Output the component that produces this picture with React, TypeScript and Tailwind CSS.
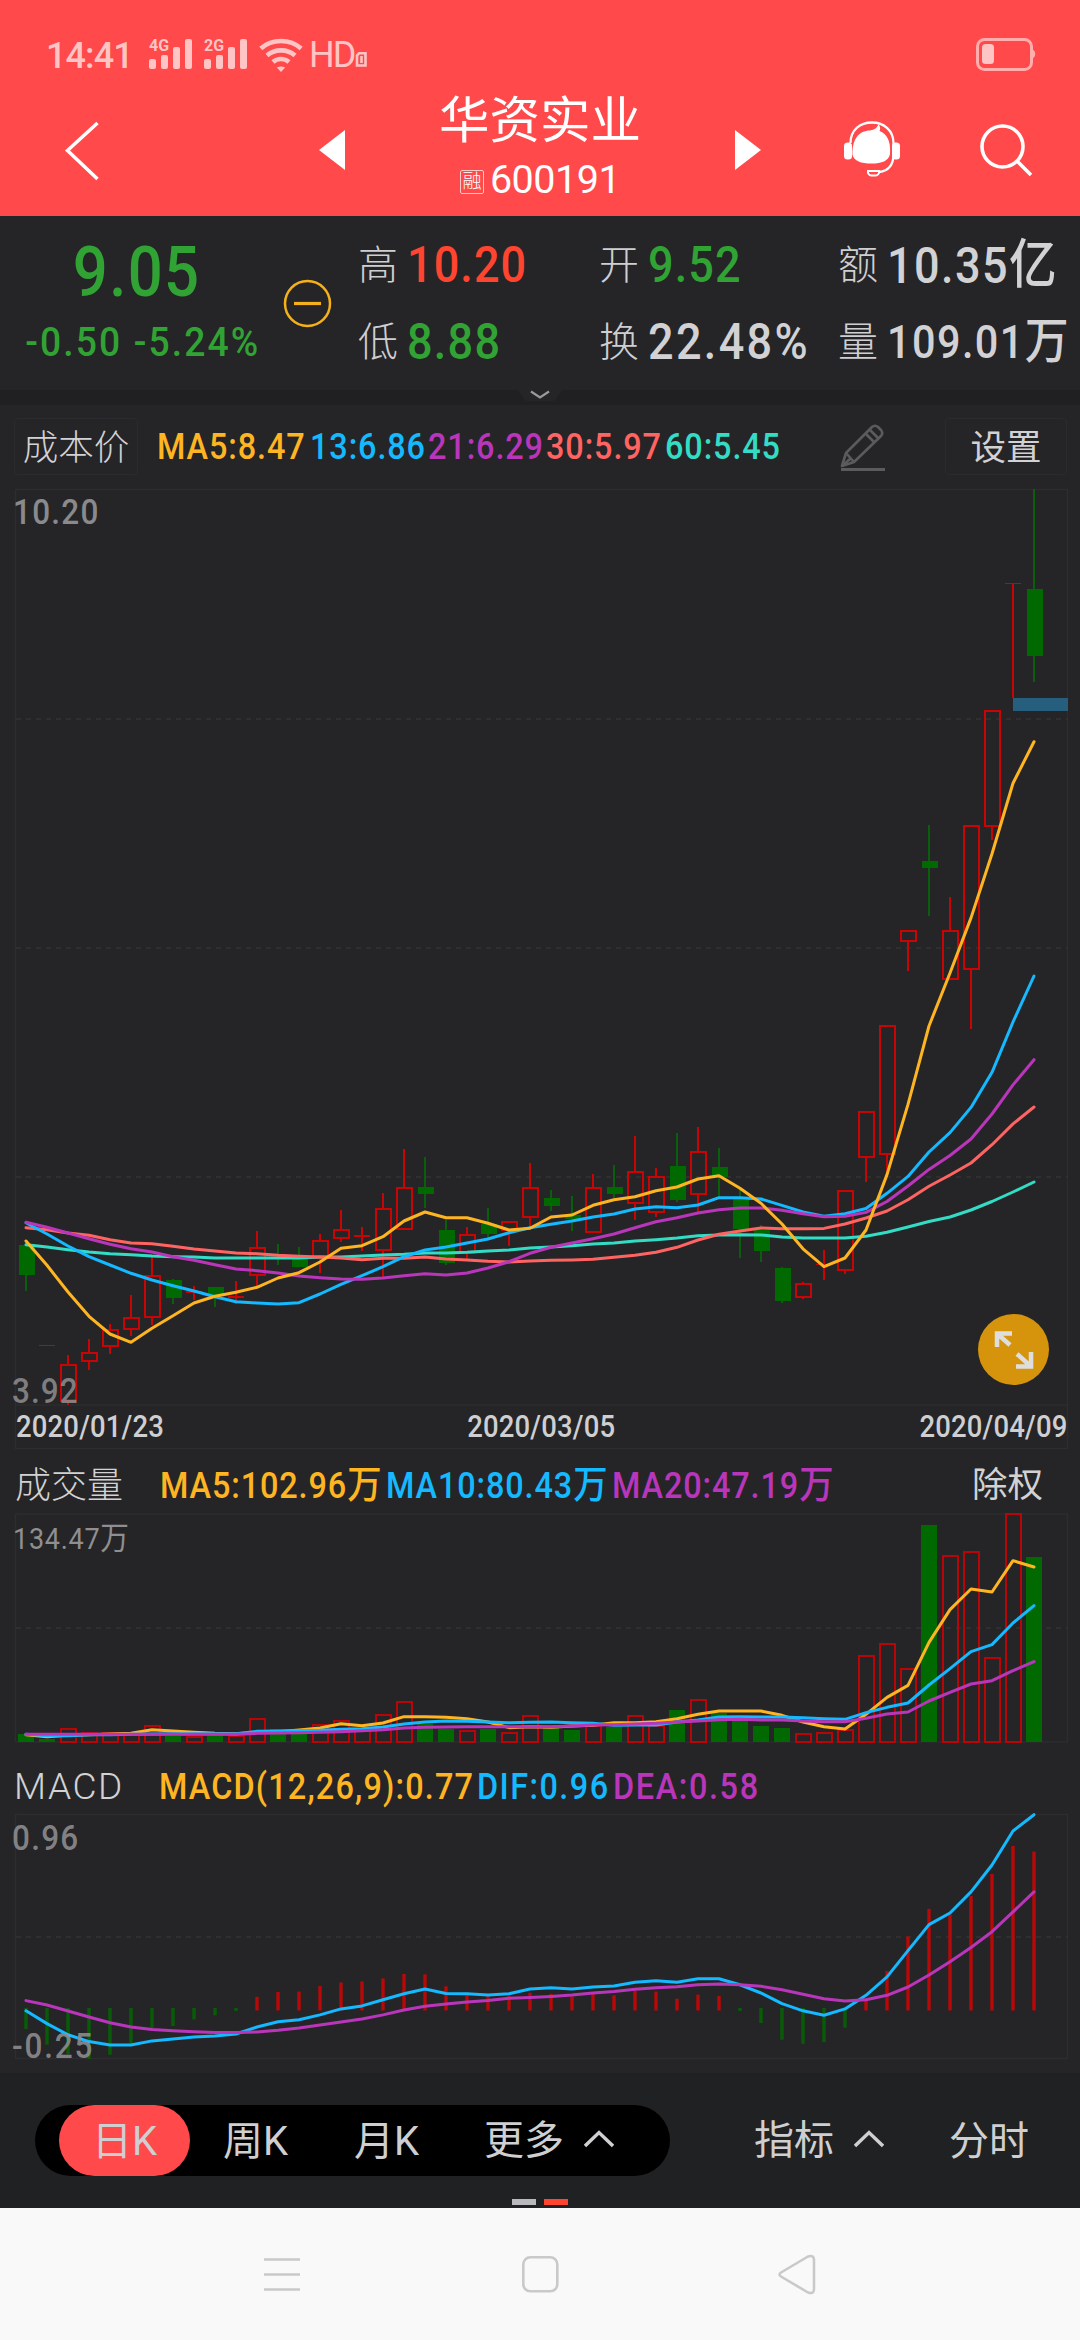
import { ReactNode } from "react";

type Candle = [kind: "r" | "g", high: number, top: number, bottom: number, low: number];

const STEP = 21;
const FIRST_X = 26;
const xAt = (i: number) => FIRST_X + i * STEP;

const candles: Candle[] = [
  ["g", 1245, 1245, 1275, 1291],
  ["g", 1345, 1345, 1346, 1346],
  ["r", 1355, 1365, 1401, 1405],
  ["r", 1339, 1353, 1361, 1370],
  ["r", 1324, 1330, 1346, 1354],
  ["r", 1295, 1318, 1329, 1336],
  ["r", 1255, 1276, 1317, 1325],
  ["g", 1279, 1280, 1298, 1304],
  ["r", 1286, 1291, 1293, 1300],
  ["g", 1287, 1287, 1296, 1307],
  ["r", 1281, 1296, 1298, 1304],
  ["r", 1231, 1248, 1275, 1288],
  ["g", 1244, 1255, 1256, 1265],
  ["g", 1247, 1258, 1267, 1267],
  ["r", 1234, 1241, 1258, 1273],
  ["r", 1210, 1230, 1238, 1242],
  ["r", 1227, 1235, 1237, 1251],
  ["r", 1193, 1209, 1250, 1279],
  ["r", 1149, 1188, 1229, 1229],
  ["g", 1157, 1187, 1194, 1208],
  ["g", 1220, 1230, 1263, 1265],
  ["r", 1227, 1235, 1253, 1259],
  ["g", 1208, 1224, 1234, 1240],
  ["r", 1222, 1222, 1230, 1246],
  ["r", 1163, 1188, 1217, 1227],
  ["g", 1190, 1198, 1206, 1211],
  ["g", 1196, 1215, 1219, 1231],
  ["r", 1174, 1188, 1232, 1233],
  ["g", 1165, 1187, 1194, 1198],
  ["r", 1136, 1172, 1203, 1220],
  ["r", 1168, 1177, 1212, 1217],
  ["g", 1133, 1166, 1200, 1202],
  ["r", 1127, 1152, 1194, 1213],
  ["g", 1148, 1167, 1177, 1198],
  ["g", 1187, 1199, 1229, 1258],
  ["g", 1225, 1230, 1251, 1262],
  ["g", 1267, 1268, 1301, 1303],
  ["r", 1282, 1284, 1297, 1299],
  ["r", 1250, 1264, 1265, 1280],
  ["r", 1191, 1191, 1270, 1274],
  ["r", 1112, 1112, 1157, 1182],
  ["r", 1026, 1026, 1154, 1173],
  ["r", 931, 931, 941, 971],
  ["g", 825, 861, 868, 916],
  ["r", 897, 931, 979, 979],
  ["r", 826, 826, 969, 1029],
  ["r", 711, 711, 826, 840],
  ["r", 583, 583, 584, 698],
  ["g", 489, 589, 656, 682],
];

const priceLines = [
  {
    color: "#33dcc5",
    ys: [1244.7, 1247, 1249.7, 1252, 1253.7, 1254.7, 1256, 1256.7, 1257, 1258, 1258, 1258, 1258, 1258, 1257, 1257, 1256, 1255, 1254.3, 1253, 1253, 1252.3, 1251, 1250, 1248, 1247, 1245.7, 1244, 1243, 1241, 1239.7, 1238, 1235.7, 1235, 1234.7, 1235, 1237, 1238, 1238, 1238, 1236.2, 1232.3, 1227, 1221.5, 1217, 1210, 1201.5, 1192, 1182],
  },
  {
    color: "#ff6463",
    ys: [1227.7, 1229.7, 1233, 1235.3, 1239.7, 1243, 1243.7, 1246.3, 1249, 1251, 1253, 1253.7, 1255.3, 1256.3, 1257, 1258, 1259.7, 1258.3, 1258.3, 1257, 1259, 1260, 1261.3, 1262, 1261, 1260.3, 1260, 1259.3, 1257.3, 1255.3, 1252.3, 1247.3, 1240, 1234.3, 1231, 1228, 1228.8, 1228.8, 1228.4, 1224, 1218, 1211, 1199.8, 1186.3, 1175, 1163, 1144.7, 1123.9, 1107],
  },
  {
    color: "#14b9ff",
    ys: [1222.7, 1234, 1246, 1256.7, 1265, 1273.3, 1280, 1285.7, 1291, 1296.7, 1301.7, 1303, 1304, 1302.7, 1294, 1284.3, 1275.7, 1266.7, 1256.7, 1250, 1247, 1243, 1239, 1232.7, 1227.7, 1224.3, 1221, 1217, 1214, 1209, 1206.7, 1207.7, 1205, 1197.7, 1197.7, 1199, 1205.4, 1212, 1216.3, 1213.7, 1208.5, 1193.3, 1176.4, 1152, 1132.6, 1107.4, 1072.3, 1022, 976],
  },
  {
    color: "#b936bb",
    ys: [1222.3, 1227.3, 1233, 1238.7, 1244.3, 1248.7, 1252, 1256.7, 1260.3, 1264.7, 1269, 1270.7, 1273, 1276, 1277.7, 1279, 1279.3, 1278, 1275.7, 1273.7, 1275, 1273, 1268, 1261.7, 1253.3, 1247.3, 1243, 1238.7, 1234, 1227.7, 1221.7, 1217.7, 1213, 1209.7, 1208, 1208, 1210.2, 1213.7, 1216.7, 1216.3, 1212.4, 1201.5, 1186, 1169.4, 1155.5, 1139, 1114, 1084.9, 1059.7],
  },
  {
    color: "#ffb522",
    ys: [1241, 1265.3, 1292, 1316.3, 1334, 1342.3, 1328.3, 1315.7, 1303, 1296.3, 1292.3, 1287.3, 1278, 1272.7, 1262, 1248.3, 1245.7, 1236.7, 1221, 1212, 1217.7, 1217.7, 1223.3, 1230, 1228.3, 1217, 1215, 1205.3, 1199.7, 1196.7, 1190.7, 1187, 1179, 1175.7, 1188.3, 1203.3, 1224, 1248.8, 1266.6, 1258, 1230, 1174.6, 1104.4, 1026, 973, 917.9, 853.7, 783.3, 741.7],
  },
];

// Volume bars take their colour from the candle of the same day
const volumes = [25, 8, 40, 26, 26, 23, 48, 19, 16, 21, 18, 69, 38, 24, 51, 63, 38, 81, 119, 53, 38, 32, 38, 28, 77, 42, 36, 48, 44, 77, 48, 95, 125, 88, 66, 49, 42, 23, 28, 36, 257, 294, 218, 650, 557, 569, 251, 683, 554];

const volumeLines = [
  {
    color: "#ffb522",
    vs: [22, 16, 20, 22, 24, 26, 37, 33, 29, 26, 25, 29, 31, 36, 42, 55, 49, 57, 76, 76, 74, 70, 60, 43, 46, 44, 48, 50, 58, 58, 61, 70, 83, 93, 93, 93, 80, 60, 46, 39, 83, 134, 170, 299, 397, 459, 450, 544, 525],
  },
  {
    color: "#14b9ff",
    vs: [23, 19, 19, 22, 22, 23, 24, 25, 25, 25, 25, 32, 33, 34, 35, 38, 40, 45, 54, 60, 63, 62, 60, 58, 59, 60, 58, 56, 50, 51, 51, 60, 66, 75, 76, 75, 75, 73, 70, 68, 88, 104, 117, 171, 220, 271, 292, 357, 409],
  },
  {
    color: "#b936bb",
    vs: [23, 23, 23, 23, 23, 23, 23, 23, 23, 23, 23, 26, 27, 28, 29, 31, 34, 37, 42, 44, 45, 46, 46, 46, 46, 46, 48, 51, 52, 54, 56, 60, 63, 67, 68, 66, 66, 63, 61, 61, 71, 84, 90, 123, 149, 174, 184, 214, 241],
  },
];

const MACD_ZERO = 2009.5;
const macdBars = [2029, 2044.6, 2054, 2059, 2054.8, 2043.5, 2028.8, 2026, 2019.4, 2015.3, 2011, 1996.8, 1992, 1991.6, 1986, 1982.5, 1981.4, 1978.4, 1974, 1974.3, 1986.3, 1993.8, 1995, 1995.7, 1992.7, 1993.8, 1996.5, 1993.8, 1995.3, 1990.8, 1991.6, 1998.7, 1994.6, 1996, 2011, 2023, 2039.7, 2043.9, 2042, 2027.7, 1998.3, 1970.9, 1936.3, 1908.8, 1914.4, 1896, 1874, 1846, 1851.6];
const dif = [2010.8, 2023.6, 2034.8, 2041.6, 2045, 2045, 2040.9, 2039, 2037, 2036, 2034, 2027, 2021.7, 2019.8, 2014.9, 2008.9, 2005.9, 1999.8, 1993.8, 1989, 1993.5, 1993.8, 1995, 1993.8, 1989, 1987.8, 1989, 1987, 1986, 1982.2, 1980.7, 1982.2, 1978.8, 1978.8, 1984.8, 1993, 2003.6, 2010.8, 2015.3, 2008.9, 1995.3, 1976.9, 1950.6, 1924.6, 1913, 1891.9, 1865, 1831, 1814.7];
const dea = [2000.6, 2005, 2011, 2017, 2022.8, 2027, 2029.6, 2030.7, 2031.8, 2032.6, 2032.6, 2032, 2030.3, 2028, 2025, 2022, 2019, 2014.9, 2010, 2006.2, 2004, 2002, 2000.6, 1998.3, 1997.6, 1996.5, 1995, 1993, 1991.6, 1989.3, 1987.8, 1986.7, 1984.8, 1984, 1984.8, 1986.3, 1989.7, 1994.2, 1998.7, 2001, 1999.8, 1995.3, 1987, 1975, 1961.8, 1947.5, 1931.7, 1911.8, 1891.9];

const toPoints = (ys: number[]) => ys.map((y, i) => `${xAt(i)},${y}`).join(" ");

const Line = ({ ys, color }: { ys: number[]; color: string }) => (
  <polyline points={toPoints(ys)} fill="none" stroke={color} strokeWidth="3" strokeLinejoin="round" strokeLinecap="round" />
);

const GridLine = ({ y }: { y: number }) => (
  <line x1="16" x2="1068" y1={y} y2={y} stroke="#333335" strokeWidth="1.5" strokeDasharray="5 5" />
);

const PriceChart = () => (
  <svg className="block" width="1080" height="961" viewBox="0 488 1080 961">
    <path d="M15.5 489.5H1067.5V1448.5H15.5ZM15.5 1405H1067.5" fill="none" stroke="#2d2d30" strokeWidth="1.5" />
    <GridLine y={719} />
    <GridLine y={948} />
    <GridLine y={1177} />
    {candles.map(([kind, high, top, bottom, low], i) => {
      const x = xAt(i);
      const flat = bottom - top <= 2;
      const color = kind === "r" ? "#c80404" : "#006a00";
      const wick = kind === "r" ? color : "#0a5f0c";
      return (
        <g key={i} stroke={color} strokeWidth="2">
          {high < top && <line x1={x} x2={x} y1={high} y2={top} stroke={wick} />}
          {low > bottom && <line x1={x} x2={x} y1={bottom} y2={low} stroke={wick} />}
          {flat ? (
            <line x1={x - 8} x2={x + 8} y1={(top + bottom) / 2} y2={(top + bottom) / 2} strokeWidth={bottom - top} />
          ) : kind === "r" ? (
            <rect x={x - 7} y={top} width="15" height={bottom - top} fill="none" />
          ) : (
            <rect x={x - 7} y={top} width="16" height={bottom - top} fill={color} stroke="none" />
          )}
        </g>
      );
    })}
    <rect x="1013" y="698" width="55" height="13" fill="#265f7d" />
    {priceLines.map((line) => (
      <Line key={line.color} ys={line.ys} color={line.color} />
    ))}
  </svg>
);

const VolumeChart = () => (
  <svg className="block" width="1080" height="230" viewBox="0 1513 1080 230">
    <path d="M15.5 1514H1067.5V1742H15.5Z" fill="none" stroke="#2d2d30" strokeWidth="1.5" />
    <GridLine y={1628} />
    {volumes.map((v, i) => {
      const h = Math.round(v / 3);
      return candles[i][0] === "r" ? (
        <rect key={i} x={xAt(i) - 7} y={1742 - h} width="15" height={h} fill="none" stroke="#b80608" strokeWidth="2" />
      ) : (
        <rect key={i} x={xAt(i) - 8} y={1742 - h} width="16" height={h} fill="#006a00" />
      );
    })}
    {volumeLines.map((line) => (
      <Line key={line.color} ys={line.vs.map((v) => 1742 - v / 3)} color={line.color} />
    ))}
  </svg>
);

const MacdChart = () => (
  <svg className="block" width="1080" height="247" viewBox="0 1813 1080 247">
    <path d="M15.5 1814.5H1067.5V2058.5H15.5Z" fill="none" stroke="#2d2d30" strokeWidth="1.5" />
    <GridLine y={1937} />
    {macdBars.map((y, i) => (
      <line
        key={i}
        x1={xAt(i)}
        x2={xAt(i)}
        y1={y > MACD_ZERO ? 2008 : 2010.5}
        y2={y}
        stroke={y > MACD_ZERO ? "#085c08" : "#b80808"}
        strokeWidth="3.4"
      />
    ))}
    <Line ys={dif} color="#14b9ff" />
    <Line ys={dea} color="#b936bb" />
  </svg>
);

const StatusBar = () => (
  <div className="flex h-[110px] items-start pl-[46px] pr-[43px] pt-[36px] text-[#ffc4c4]">
    <span className="mt-px w-[103px] whitespace-nowrap text-[36px] font-medium leading-[38px] tracking-[-0.9px]">14:41</span>
    {["4G", "2G"].map((net) => (
      <div key={net} className="relative mt-[3px] h-[30px] w-[55px]">
        <span className="absolute -top-px left-0 text-[16px] font-bold leading-[15px]">{net}</span>
        <div className="flex h-[30px] items-end gap-[5px]">
          <i className="h-[10px] w-[7px] rounded-[2px] bg-current" />
          <i className="h-[14px] w-[7px] rounded-[2px] bg-current" />
          <i className="h-[22px] w-[7px] rounded-[2px] bg-current" />
          <i className="h-[30px] w-[7px] rounded-[2px] bg-current" />
        </div>
      </div>
    ))}
    <svg className="mt-[2px]" width="44" height="34" viewBox="0 0 44 34" fill="none" stroke="currentColor" strokeWidth="4.6">
      <path d="M1.8 10.5C13 0.5 31 0.5 42.2 10.5" />
      <path d="M8 17.5C15.5 10.7 28.5 10.7 36 17.5" />
      <path d="M14 24C18.5 20 25.5 20 30 24" />
      <path d="M17.8 29.6Q22 27.5 26.2 29.6L22 34Z" fill="currentColor" stroke="none" />
    </svg>
    <span className="ml-[6px] mt-px w-[46px] text-[36px] leading-[37px] tracking-[-2px]">HD</span>
    <svg className="mt-[15px]" width="13" height="17" viewBox="0 0 13 17" fill="none" stroke="currentColor" strokeWidth="2.6">
      <path d="M4 2.3H10.5V14.5H2V4.5ZM6.5 5V12" />
    </svg>
    <svg className="ml-auto mt-[2px]" width="61" height="33" viewBox="0 0 61 33">
      <rect x="1.5" y="1.5" width="54" height="30" rx="7" fill="none" stroke="#ffadad" strokeWidth="3" />
      <rect x="6" y="6" width="12" height="20" rx="3.5" fill="#ffc4c4" />
      <path d="M57 12.5a3 4 0 0 1 0 7z" fill="#ffadad" stroke="#ffadad" strokeWidth="1.5" />
    </svg>
  </div>
);

const TitleBar = () => (
  <div className="-mt-[24px] flex h-[130px] items-start text-white">
    <svg className="ml-[64px] mt-[35px]" width="36" height="60" viewBox="0 0 36 60" fill="none" stroke="currentColor" strokeWidth="3.5">
      <path d="M33.5 2L3.5 29.5L33.5 58" />
    </svg>
    <svg className="ml-[219px] mt-[44px]" width="26" height="40" viewBox="0 0 26 40">
      <path d="M26 0V40L0 20Z" fill="currentColor" />
    </svg>
    <div className="flex w-[390px] flex-col items-center pt-[6px]">
      <h1 className="text-[50.5px] leading-[58px]">华资实业</h1>
      <div className="mt-[2px] flex h-[56px] items-center">
        <span className="mt-[3px] flex h-[24px] w-[24px] items-center justify-center rounded-[2px] border border-[#ffc8c8] text-[19px] font-light leading-none">融</span>
        <span className="ml-[6px] text-[39.5px] leading-none tracking-[-0.5px]">600191</span>
      </div>
    </div>
    <svg className="mt-[44px]" width="26" height="40" viewBox="0 0 26 40">
      <path d="M0 0V40L26 20Z" fill="currentColor" />
    </svg>
    <svg className="ml-[83px] mt-[35px]" width="56" height="56" viewBox="0 0 56 56">
      <path d="M6.5 22C6.5 9 16 1.5 28 1.5C40 1.5 49.5 9.5 49.5 22V33C49.5 45 44 50 35 51" fill="none" stroke="currentColor" strokeWidth="2.3" />
      <path d="M8.5 34C8 18 15 9.5 26 9.5C31 8.5 33 7 34.5 3C36.5 6 36.5 8 35.5 10C43 13 47 20 46 33C44.5 40 38 42.5 27.5 42.5C17 42.5 10 40 8.5 34Z" fill="currentColor" />
      <rect x="0" y="21.5" width="8" height="17" rx="3.5" fill="currentColor" />
      <rect x="48" y="21.5" width="8" height="17" rx="3.5" fill="currentColor" />
      <path d="M24 50H35V52Q34 54.5 31.5 54.5H27.5Q25 54.5 24 52Z" fill="none" stroke="currentColor" strokeWidth="2" />
    </svg>
    <svg className="ml-[80px] mt-[37px]" width="54" height="54" viewBox="0 0 54 54" fill="none" stroke="currentColor" strokeWidth="3.6">
      <circle cx="22.5" cy="23.5" r="20.5" />
      <path d="M37 38L51 52" />
    </svg>
  </div>
);

// Narrow, widely set figures
const Num = ({ children, className = "" }: { children: ReactNode; className?: string }) => (
  <span className={`inline-block origin-left scale-x-90 whitespace-nowrap ${className}`}>{children}</span>
);

const Unit = ({ children }: { children: ReactNode }) => <span className="text-[1.06em] leading-none">{children}</span>;

const Quote = ({ label, children, className }: { label: string; children: ReactNode; className: string }) => (
  <div className="flex h-[77px] items-center whitespace-nowrap">
    <span className="mt-[2px] w-[49px] shrink-0 text-[40px] font-light leading-none text-[#cfcfd1]">{label}</span>
    <Num className={`mt-px shrink-0 font-medium leading-none ${className}`}>{children}</Num>
  </div>
);

const QuotePanel = () => (
  <div className="flex h-[174px] pt-[10px]">
    <div className="flex w-[274px] flex-col items-center whitespace-nowrap font-medium text-[#31a334]">
      <span className="mt-[11px] scale-x-[0.88] text-[70px] leading-[70px] tracking-[1.6px]">9.05</span>
      <span className="ml-[12px] mt-[15px] scale-x-[0.92] text-[40.5px] leading-[40px] tracking-[2.3px]">-0.50 -5.24%</span>
    </div>
    <svg className="ml-[9px] mt-[53px]" width="49" height="49" viewBox="0 0 49 49" fill="none" stroke="#f5b11c">
      <circle cx="24.5" cy="24.5" r="22.5" strokeWidth="2.5" />
      <path d="M11 24.5H38" strokeWidth="3.2" />
    </svg>
    <div className="ml-[26px] w-[241px]">
      <Quote label="高" className="text-[50px] tracking-[1.2px] text-[#ff4530]">10.20</Quote>
      <Quote label="低" className="text-[50px] tracking-[1.4px] text-[#31a334]">8.88</Quote>
    </div>
    <div className="w-[239px]">
      <Quote label="开" className="text-[50px] tracking-[1.2px] text-[#31a334]">9.52</Quote>
      <Quote label="换" className="text-[50px] tracking-[2.6px] text-[#d2d2d4]">22.48%</Quote>
    </div>
    <div className="w-[240px]">
      <Quote label="额" className="text-[50px] tracking-[1.6px] text-[#d2d2d4]">10.35<Unit>亿</Unit></Quote>
      <Quote label="量" className="text-[46px] tracking-[1.6px] text-[#d2d2d4]">109.01<Unit>万</Unit></Quote>
    </div>
  </div>
);

const Divider = () => (
  <div className="flex h-[15px] justify-center bg-[#202022]">
    <svg width="52" height="15" viewBox="0 0 52 15" fill="none">
      <path d="M4 0H48L42 9Q41 11 38 11H14Q11 11 10 9Z" fill="#252527" />
      <path d="M17 1.5L26 7.5L35 1.5" stroke="#9a9a9c" strokeWidth="2.2" />
    </svg>
  </div>
);

const IndicatorBar = () => (
  <div className="flex h-[83px] items-start whitespace-nowrap pt-[13px] text-[35.5px] leading-[58px]">
    <span className="ml-[14px] h-[57px] w-[124px] rounded-[4px] border-[1.5px] border-[#2b2b2d] text-center font-light text-[#d2d2d4]">成本价</span>
    <div className="ml-[19px] flex text-[36px] font-medium leading-[58px] tracking-[1px]">
      <span className="w-[153px] text-[#ffb522]"><Num>MA5:8.47</Num></span>
      <span className="w-[118px] text-[#14b9ff]"><Num>13:6.86</Num></span>
      <span className="w-[118px] text-[#b936bb]"><Num>21:6.29</Num></span>
      <span className="w-[119px] text-[#ff6463]"><Num>30:5.97</Num></span>
      <span className="w-[120px] text-[#33dcc5]"><Num>60:5.45</Num></span>
    </div>
    <svg className="ml-[55px] mt-[6px]" width="46" height="48" viewBox="0 0 46 48" fill="none" stroke="#5b5b5d" strokeWidth="2.6" strokeLinejoin="round">
      <path d="M2 42L6 29L32 3Q35 0.500 38 3L41 6Q43.500 9 41 12L14 38Z" />
      <path d="M6 29L14 38M26 10L34 18M30 6L38 14M2 42L10 35" />
      <path d="M1 45.5H45" strokeWidth="3" />
    </svg>
    <span className="ml-[59px] h-[57px] w-[122px] rounded-[4px] border-[1.5px] border-[#2b2b2d] text-center text-[#d2d2d4]">设置</span>
  </div>
);

const tabs = ["日K", "周K", "月K"];

const Caret = () => (
  <svg className="-mt-[3px]" width="30" height="18" viewBox="0 0 30 18" fill="none" stroke="#cfcfd1" strokeWidth="3.4">
    <path d="M1 16L15 2.5L29 16" />
  </svg>
);

const BottomTabs = () => (
  <div className="relative flex h-[135px] items-start whitespace-nowrap bg-[#202123] pt-[32px] text-[40px] leading-[73px] text-[#cfcfd1]">
    <div className="ml-[35px] flex h-[71px] w-[635px] rounded-full bg-black pl-[24px]">
      {tabs.map((tab, i) => (
        <span key={tab} className={`h-[71px] w-[131px] rounded-full text-center ${i === 0 ? "bg-[#ff494a]" : ""}`}>
          {tab}
        </span>
      ))}
      <span className="ml-[32px] flex items-center gap-[20px]">
        更多
        <Caret />
      </span>
    </div>
    <span className="ml-[84px] flex h-[71px] items-center gap-[20px]">
      指标
      <Caret />
    </span>
    <span className="ml-[65px]">分时</span>
    <div className="absolute bottom-[3px] left-[512px] flex gap-[8px]">
      <i className="h-[6px] w-[24px] bg-[#b9b9bd]" />
      <i className="h-[6px] w-[24px] bg-[#ff4530]" />
    </div>
  </div>
);

const SystemNav = () => (
  <div className="flex h-[132px] items-start bg-[#f9f9f9] pl-[264px] pt-[46px]">
    <svg width="36" height="42" viewBox="0 0 36 42" stroke="#c9c9c9" strokeWidth="2.6">
      <path d="M0 5.5H36M0 20.5H36M0 35.5H36" />
    </svg>
    <svg className="ml-[221px]" width="38" height="42" viewBox="0 0 38 42" fill="none" stroke="#c9c9c9" strokeWidth="2.6">
      <rect x="2.3" y="3.3" width="34" height="34" rx="7" />
    </svg>
    <svg className="ml-[218px]" width="40" height="42" viewBox="0 0 40 42" fill="none" stroke="#c9c9c9" strokeWidth="2.6" strokeLinejoin="round">
      <path d="M4 18.5L31 2.5Q37 0.5 37 6V35Q37 40.5 31 38.5L4 22.5Q1 20.5 4 18.5Z" />
    </svg>
  </div>
);

export default function App() {
  return (
    <div className="h-[2340px] w-[1080px] overflow-hidden bg-[#252527] font-['Roboto','Noto_Sans_CJK_SC',sans-serif]">
      <header className="h-[216px] bg-[#ff494a]">
        <StatusBar />
        <TitleBar />
      </header>
      <QuotePanel />
      <Divider />
      <IndicatorBar />

      <section className="relative h-[961px]">
        <PriceChart />
        <Num className="absolute left-[13px] top-[7px] text-[35px] font-medium leading-[36px] tracking-[1.4px] text-[#8a8a8c]">10.20</Num>
        <Num className="absolute bottom-[39px] left-[12px] text-[35px] font-medium leading-[36px] tracking-[1.2px] text-[#8f8f91]/85">3.92</Num>
        <div className="absolute bottom-0 left-[16px] flex h-[43px] w-[1051px] justify-between text-[30.5px] font-medium leading-[42px] tracking-[0.2px] text-[#cfcfd1]">
          <span className="origin-left scale-x-90">2020/01/23</span>
          <span className="scale-x-90">2020/03/05</span>
          <span className="origin-right scale-x-90">2020/04/09</span>
        </div>
        <button className="absolute bottom-[64px] right-[31px] flex h-[71px] w-[71px] items-center justify-center rounded-full bg-[#d5940b]">
          <svg width="40" height="40" viewBox="0 0 40 40" fill="none" stroke="#dedede" strokeWidth="4.5">
            <path d="M18 3.5H3V17M3 3.5L16 15M22 36.5H37V22M37 36.5L23 24" />
          </svg>
        </button>
      </section>

      <div className="flex h-[64px] items-center whitespace-nowrap pt-[8px] text-[36px] font-medium leading-none tracking-[1px]">
        <span className="ml-[15px] mt-px w-[145px] font-light tracking-normal text-[#d2d2d4]">成交量</span>
        <span className="w-[226px] text-[#ffb522]"><Num>MA5:102.96<Unit>万</Unit></Num></span>
        <span className="w-[226px] text-[#14b9ff]"><Num>MA10:80.43<Unit>万</Unit></Num></span>
        <span className="w-[360px] text-[#b936bb]"><Num>MA20:47.19<Unit>万</Unit></Num></span>
        <span className="mt-px text-[35.5px] font-normal tracking-normal text-[#d2d2d4]">除权</span>
      </div>
      <section className="relative h-[230px]">
        <VolumeChart />
        <Num className="absolute left-[13px] top-[8px] text-[30px] leading-[36px] tracking-[0.8px] text-[#8f8f91]">134.47<Unit>万</Unit></Num>
      </section>

      <div className="flex h-[70px] items-center whitespace-nowrap pt-[17px] text-[36px] font-medium leading-none tracking-[1.3px]">
        <span className="ml-[14px] w-[145px] text-[37px] font-light tracking-[1.6px] text-[#d2d2d4]">MACD</span>
        <span className="w-[318px] text-[#ffb522]"><Num>MACD(12,26,9):0.77</Num></span>
        <span className="w-[136px] text-[#14b9ff]"><Num className="tracking-[1.6px]">DIF:0.96</Num></span>
        <span className="text-[#b936bb]"><Num className="tracking-[1.8px]">DEA:0.58</Num></span>
      </div>
      <section className="relative h-[260px]">
        <MacdChart />
        <Num className="absolute left-[12px] top-[8px] text-[35px] font-medium leading-[36px] tracking-[1.4px] text-[#8f8f91]/90">0.96</Num>
        <Num className="absolute left-[12px] top-[216px] text-[35px] font-medium leading-[36px] tracking-[2px] text-[#8f8f91]/90">-0.25</Num>
      </section>

      <BottomTabs />
      <SystemNav />
    </div>
  );
}
